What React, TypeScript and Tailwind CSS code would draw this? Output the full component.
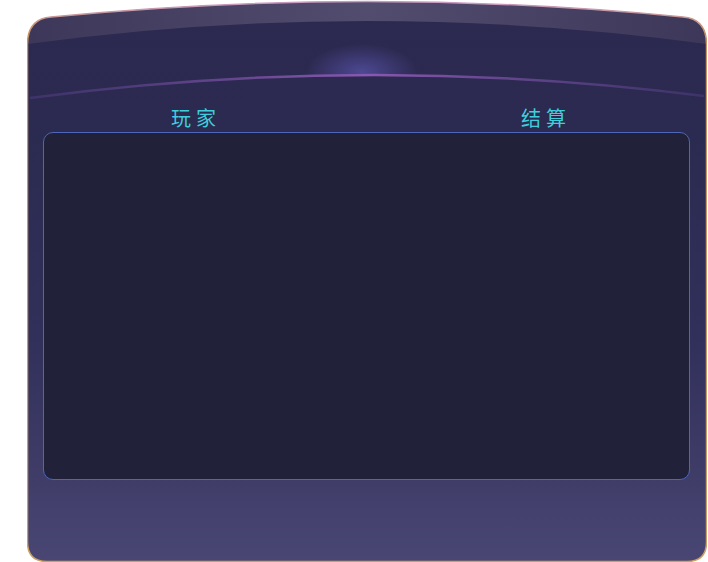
import React from 'react';

// Decorative frame artwork: curved top, light band, glow and purple arc
function FrameArt() {
  return (
    <svg
      className="absolute inset-0 h-full w-full"
      viewBox="0 0 680 562"
      preserveAspectRatio="none"
      aria-hidden
    >
      <defs>
        <linearGradient id="body" x1="0" y1="0" x2="0" y2="1">
          <stop offset="0" stopColor="#2d2950" />
          <stop offset="0.24" stopColor="#2b2a50" />
          <stop offset="0.6" stopColor="#31305a" />
          <stop offset="0.86" stopColor="#403e69" />
          <stop offset="1" stopColor="#494674" />
        </linearGradient>
        <linearGradient id="band" x1="0" y1="0" x2="1" y2="0">
          <stop offset="0" stopColor="#3d3859" />
          <stop offset="0.5" stopColor="#524d6e" />
          <stop offset="1" stopColor="#3d3859" />
        </linearGradient>
        <linearGradient id="arc" x1="0" y1="0" x2="1" y2="0">
          <stop offset="0" stopColor="#4a3a7a" stopOpacity="0.6" />
          <stop offset="0.5" stopColor="#8a58b0" />
          <stop offset="1" stopColor="#4a3a7a" stopOpacity="0.6" />
        </linearGradient>
        <linearGradient id="edge" x1="0" y1="0" x2="0" y2="1">
          <stop offset="0" stopColor="#c99ac4" />
          <stop offset="0.06" stopColor="#c8945e" />
          <stop offset="1" stopColor="#c9a064" />
        </linearGradient>
        <radialGradient id="glow" cx="0.5" cy="0.5" r="0.5">
          <stop offset="0" stopColor="#5550a4" stopOpacity="0.8" />
          <stop offset="1" stopColor="#5550a4" stopOpacity="0" />
        </radialGradient>
        <clipPath id="shape">
          <path d="M0.5,44 Q0.5,19 24,17 Q340,-14 656,17 Q679.5,19 679.5,44 L679.5,542 Q679.5,561.5 660,561.5 L20,561.5 Q0.5,561.5 0.5,542 Z" />
        </clipPath>
        <clipPath id="aboveArc">
          <path d="M0,0 L680,0 L680,96 Q340,53 0,98 Z" />
        </clipPath>
      </defs>
      <g clipPath="url(#shape)">
        <rect x="0" y="0" width="680" height="562" fill="url(#body)" />
        <path d="M0,0 L680,0 L680,44 Q340,-2 0,44 Z" fill="url(#band)" />
        <g clipPath="url(#aboveArc)">
          <ellipse cx="335" cy="72" rx="56" ry="28" fill="url(#glow)" />
        </g>
        <path d="M3,98 Q340,53 677,96" fill="none" stroke="url(#arc)" strokeWidth="2.5" />
      </g>
      <path
        d="M0.5,44 Q0.5,19 24,17 Q340,-14 656,17 Q679.5,19 679.5,44 L679.5,542 Q679.5,561.5 660,561.5 L20,561.5 Q0.5,561.5 0.5,542 Z"
        fill="none"
        stroke="url(#edge)"
        strokeWidth="1.5"
      />
    </svg>
  );
}

export default function App() {
  return (
    <div className="h-[562px] w-[708px] overflow-hidden bg-white">
      <div className="relative ml-[27px] h-[562px] w-[680px]">
        <FrameArt />
        <div className="relative flex h-full flex-col px-4 pt-[104px]">
          <div
            className="flex h-[28px] items-center text-[20px] leading-[28px] tracking-[5px] text-[#3fcfdc]"
            style={{ fontFamily: '"Noto Sans CJK SC", "Noto Sans", sans-serif' }}
          >
            <span className="ml-[128px]">玩家</span>
            <span className="ml-auto mr-[120px]">结算</span>
          </div>
          <div className="h-[348px] w-[647px] rounded-[10px] border border-[#4d66b8] bg-[#21223a]" />
        </div>
      </div>
    </div>
  );
}
